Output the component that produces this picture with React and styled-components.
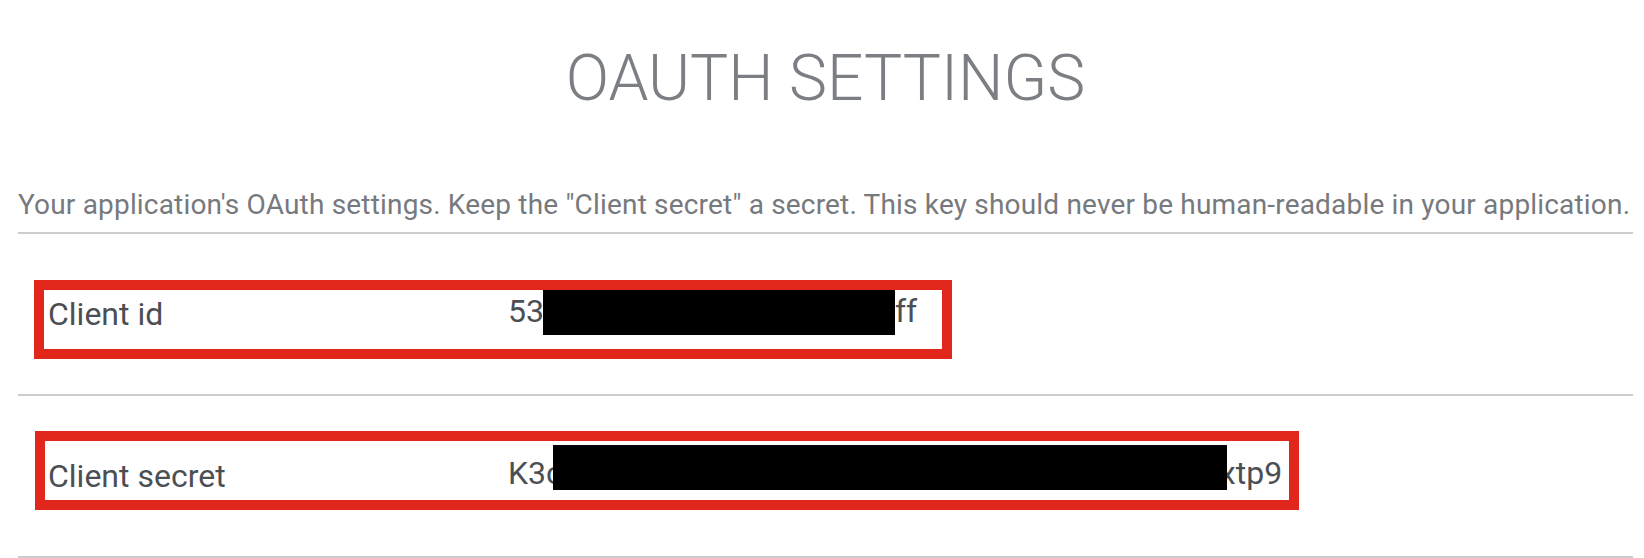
import React from "react";
import styled, { createGlobalStyle } from "styled-components";

const Global = createGlobalStyle`
  html, body { margin: 0; padding: 0; background: #ffffff; }
  body { font-family: Roboto, "Noto Sans", "Liberation Sans", sans-serif; }
`;

const Page = styled.main`
  width: 1644px;
  height: 558px;
  box-sizing: border-box;
  padding: 40px 11px 0 18px;
  overflow: hidden;
`;

const Title = styled.h1`
  margin: 0;
  font-size: 64px;
  line-height: 78px;
  font-weight: 300;
  color: #7b7f83;
  text-align: center;
  letter-spacing: 0;
`;

const Description = styled.p`
  margin: 70px 0 0;
  padding-bottom: 11px;
  font-size: 28px;
  line-height: 33px;
  letter-spacing: 0.18px;
  color: #76797d;
  border-bottom: 2px solid #cccccc;
  white-space: nowrap;
`;

const Row = styled.div`
  position: relative;
  height: 160px;
  display: flex;
  align-items: center;
  padding-left: 30px;
  border-bottom: 2px solid #cccccc;
  font-size: 32px;
  line-height: 40px;
  color: #4b4f54;
`;

const Label = styled.span`
  width: 460px;
  flex: none;
`;

const Value = styled.span`
  white-space: nowrap;
`;

const Redaction = styled.span`
  display: inline-block;
  vertical-align: middle;
  width: ${(p) => p.$w}px;
  height: 45px;
  background: #000000;
  margin-left: ${(p) => p.$ml || 0}px;
  margin-right: ${(p) => p.$mr || 0}px;
  transform: translateY(${(p) => p.$shift}px);
`;

const Highlight = styled.div`
  position: absolute;
  left: ${(p) => p.$left}px;
  top: ${(p) => p.$top}px;
  width: ${(p) => p.$width}px;
  height: 79px;
  box-sizing: border-box;
  border: 10px solid #e1261b;
  pointer-events: none;
`;

const rows = [
  {
    label: "Client id",
    prefix: "53",
    redact: { w: 352, ml: -1, mr: 0, shift: -2 },
    suffix: "ff",
    box: { left: 16, top: 46, width: 918 },
  },
  {
    label: "Client secret",
    prefix: "K3c",
    redact: { w: 674, ml: -10, mr: -7, shift: -9 },
    suffix: "xtp9",
    box: { left: 17, top: 35, width: 1264 },
  },
];

export default function App() {
  return (
    <>
      <Global />
      <Page>
        <Title>OAUTH SETTINGS</Title>
        <Description>
          Your application's OAuth settings. Keep the "Client secret" a secret. This key should never be human-readable in your application.
        </Description>
        {rows.map((r) => (
          <Row key={r.label}>
            <Label>{r.label}</Label>
            <Value>
              {r.prefix}
              <Redaction $w={r.redact.w} $ml={r.redact.ml} $mr={r.redact.mr} $shift={r.redact.shift} />
              {r.suffix}
            </Value>
            <Highlight $left={r.box.left} $top={r.box.top} $width={r.box.width} />
          </Row>
        ))}
      </Page>
    </>
  );
}
